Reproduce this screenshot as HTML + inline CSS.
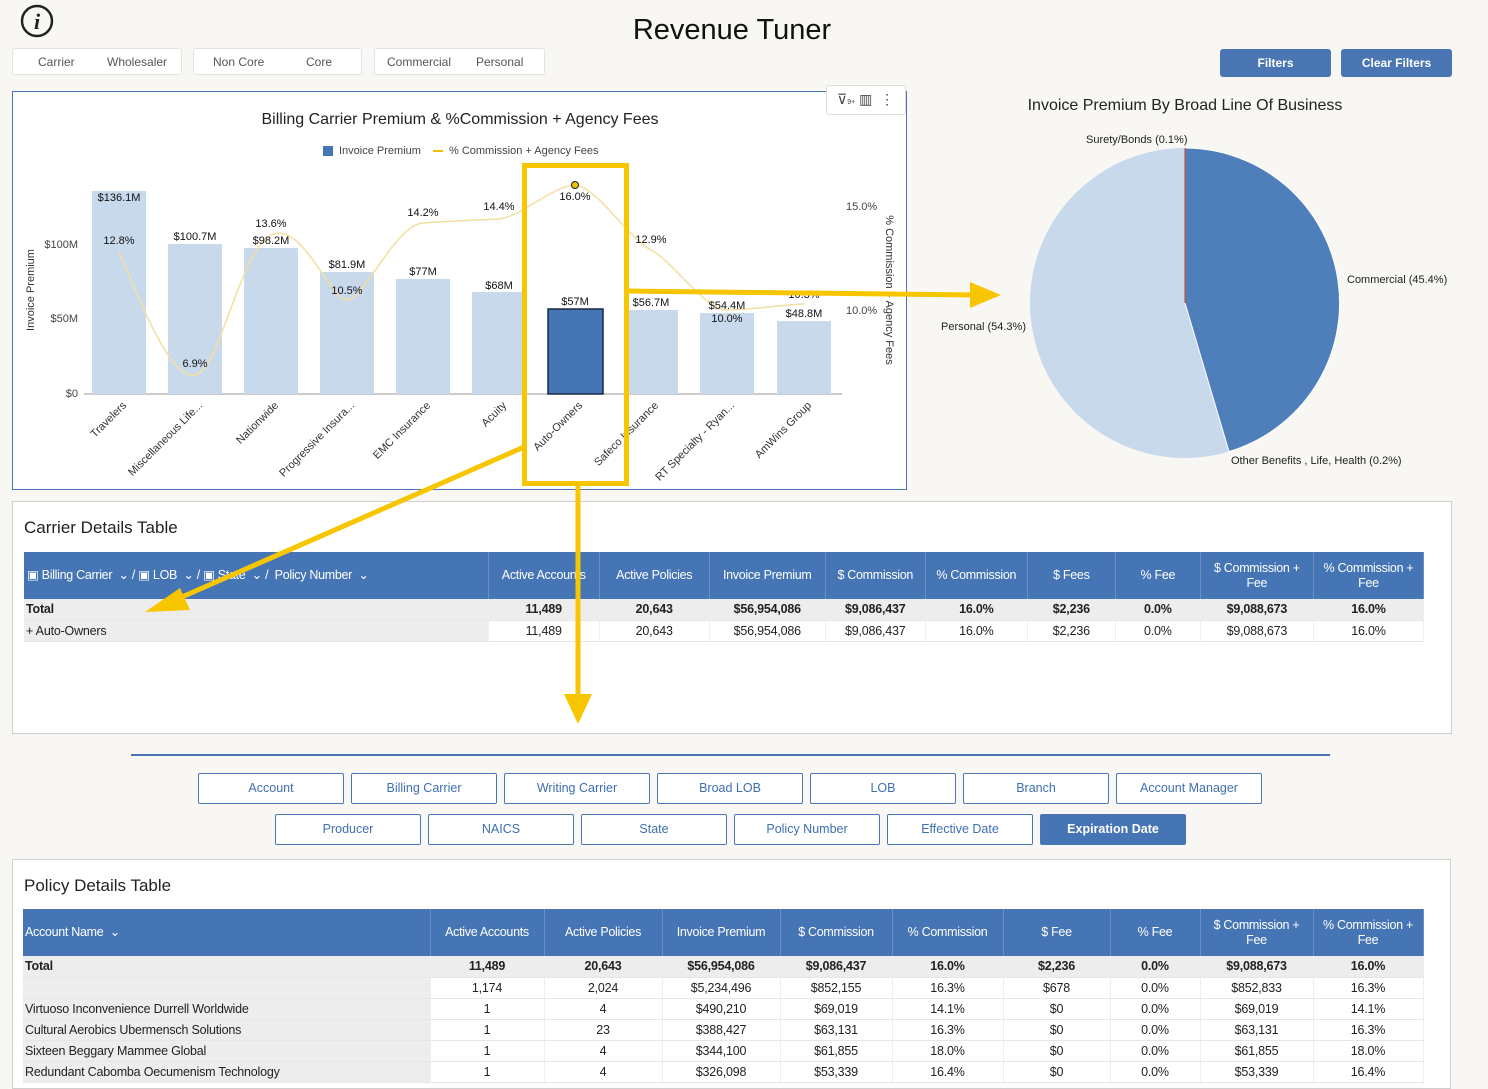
<!DOCTYPE html>
<html><head><meta charset="utf-8"><style>
*{box-sizing:border-box;margin:0;padding:0}
body{width:1488px;height:1077px;background:#f8f7f3;font-family:"Liberation Sans",sans-serif;position:relative;overflow:hidden;color:#222}
.abs{position:absolute}
.seg{position:absolute;top:48px;height:27px;background:#fff;border:1px solid #e3e3e3;border-radius:3px;font-size:12px;color:#555}
.seg span{position:absolute;top:6px}
.btn{position:absolute;background:#4a77b4;color:#fff;font-size:12px;font-weight:bold;text-align:center;border-radius:3px;line-height:28px}
.panel{position:absolute;background:#fff;border:1px solid #cfcfcf}
table{border-collapse:collapse;table-layout:fixed;position:absolute;font-size:12.5px}
th{background:#4575b4;color:#fff;font-weight:normal;border-right:1px solid #6b90c4;text-align:center;font-size:12.5px;line-height:15px;letter-spacing:-0.3px}
td{text-align:center;height:21px;border-bottom:1px solid #e6e6e6;border-right:1px solid #eee;letter-spacing:-0.2px}
td.l{text-align:left;background:#ededed;padding-left:2px}
tr.t td{background:#ededed;font-weight:bold}
.nb{position:absolute;height:31px;border:1px solid #4a77b4;border-radius:2px;color:#3f6fb0;font-size:12.5px;text-align:center;line-height:29px;background:#fff;width:146px}
</style></head><body>
<svg class="abs" style="left:19px;top:3px" width="36" height="36" viewBox="0 0 36 36"><circle cx="18" cy="18" r="15" fill="none" stroke="#222" stroke-width="2.5"/><text x="18" y="26" font-family="Liberation Serif" font-style="italic" font-weight="bold" font-size="22" text-anchor="middle" fill="#222">i</text></svg>
<div class="abs" style="left:0;width:1464px;top:14px;text-align:center;font-size:29px;color:#111">Revenue Tuner</div>
<div class="seg" style="left:12px;width:170px"><span style="left:25px">Carrier</span><span style="left:94px">Wholesaler</span></div>
<div class="seg" style="left:193px;width:169px"><span style="left:19px">Non Core</span><span style="left:112px">Core</span></div>
<div class="seg" style="left:374px;width:171px"><span style="left:12px">Commercial</span><span style="left:101px">Personal</span></div>
<div class="btn" style="left:1220px;top:49px;width:111px">Filters</div>
<div class="btn" style="left:1341px;top:49px;width:111px">Clear Filters</div>

<div class="panel" style="left:12px;top:91px;width:895px;height:399px;border-color:#4a77b4"></div>
<div class="abs" style="left:826px;top:85px;width:80px;height:30px;background:#fff;border:1px solid #ddd;border-radius:3px;font-size:14px;color:#444;padding:5px 0 0 10px">⊽<span style="font-size:7px">9+</span> ▥ &nbsp;⋮</div>

<svg class="abs" style="left:0;top:0" width="1488" height="1077" font-family="Liberation Sans">
<text x="460" y="124" font-size="16" text-anchor="middle" fill="#222">Billing Carrier Premium &amp; %Commission + Agency Fees</text>
<rect x="323" y="146" width="10" height="10" fill="#4575b4"/><text x="339" y="154" font-size="11" fill="#444">Invoice Premium</text>
<line x1="433" y1="151" x2="443" y2="151" stroke="#f0c000" stroke-width="2"/><text x="449" y="154" font-size="11" fill="#444">% Commission + Agency Fees</text>
<text x="78" y="248" font-size="11" text-anchor="end" fill="#444">$100M</text>
<text x="78" y="322" font-size="11" text-anchor="end" fill="#444">$50M</text>
<text x="78" y="397" font-size="11" text-anchor="end" fill="#444">$0</text>
<text x="34" y="290" font-size="11" text-anchor="middle" fill="#333" transform="rotate(-90 34 290)">Invoice Premium</text>
<text x="846" y="210" font-size="11" fill="#444">15.0%</text>
<text x="846" y="314" font-size="11" fill="#444">10.0%</text>
<text x="886" y="290" font-size="11" text-anchor="middle" fill="#333" transform="rotate(90 886 290)">% Commission + Agency Fees</text>
<line x1="84" y1="394" x2="842" y2="394" stroke="#999"/>
<g fill="#c9d9ec">
<rect x="92" y="191" width="54" height="203"/><rect x="168" y="244" width="54" height="150"/><rect x="244" y="248" width="54" height="146"/><rect x="320" y="272" width="54" height="122"/><rect x="396" y="279" width="54" height="115"/><rect x="472" y="292" width="54" height="102"/><rect x="624" y="310" width="54" height="84"/><rect x="700" y="313" width="54" height="81"/><rect x="777" y="321" width="54" height="73"/>
</g>
<rect x="548" y="309" width="55" height="85" fill="#4575b4" stroke="#1a2a44" stroke-width="1.5"/>
<path d="M119 252 C140 300,170 380,195 375 S240 250,271 235 S330 300,347 300 S395 225,423 223 S480 220,499 219 S555 185,575 185 S630 240,651 250 S705 310,727 310 S790 304,804 304" fill="none" stroke="#f3dfa0" stroke-width="1.5"/>
<circle cx="575" cy="185" r="3.5" fill="#f0c000" stroke="#222"/>
<g font-size="11" fill="#111" text-anchor="middle">
<text x="119" y="201">$136.1M</text><text x="195" y="240">$100.7M</text><text x="271" y="244">$98.2M</text><text x="347" y="268">$81.9M</text><text x="423" y="275">$77M</text><text x="499" y="289">$68M</text><text x="575" y="305">$57M</text><text x="651" y="306">$56.7M</text><text x="727" y="309">$54.4M</text><text x="804" y="317">$48.8M</text>
<text x="119" y="244">12.8%</text><text x="195" y="367">6.9%</text><text x="271" y="227">13.6%</text><text x="347" y="294">10.5%</text><text x="423" y="216">14.2%</text><text x="499" y="210">14.4%</text><text x="575" y="200">16.0%</text><text x="651" y="243">12.9%</text><text x="727" y="322">10.0%</text><text x="804" y="298">10.3%</text>
</g>
<g font-size="11" fill="#333" text-anchor="end">
<text transform="translate(127,406) rotate(-45)">Travelers</text>
<text transform="translate(203,406) rotate(-45)">Miscellaneous Life...</text>
<text transform="translate(279,406) rotate(-45)">Nationwide</text>
<text transform="translate(355,406) rotate(-45)">Progressive Insura...</text>
<text transform="translate(431,406) rotate(-45)">EMC Insurance</text>
<text transform="translate(507,406) rotate(-45)">Acuity</text>
<text transform="translate(583,406) rotate(-45)">Auto-Owners</text>
<text transform="translate(659,406) rotate(-45)">Safeco Insurance</text>
<text transform="translate(735,406) rotate(-45)">RT Specialty - Ryan...</text>
<text transform="translate(812,406) rotate(-45)">AmWins Group</text>
</g>
<text x="1185" y="110" font-size="16" text-anchor="middle" fill="#222">Invoice Premium By Broad Line Of Business</text>
<circle cx="1185" cy="303" r="155" fill="#c9d9ec"/>
<path d="M1185 303 L1185 148 A155 155 0 0 1 1229 451.5 Z" fill="#4f7fba" stroke="#fff" stroke-width="1"/>
<line x1="1185" y1="148" x2="1185" y2="303" stroke="#d04020" stroke-width="1"/>
<g font-size="11" fill="#222">
<text x="1086" y="143">Surety/Bonds (0.1%)</text>
<text x="1347" y="283">Commercial (45.4%)</text>
<text x="941" y="330">Personal (54.3%)</text>
<text x="1231" y="464">Other Benefits , Life, Health (0.2%)</text>
</g>
</svg>

<div class="panel" style="left:12px;top:501px;width:1440px;height:233px"></div>
<div class="abs" style="left:24px;top:518px;font-size:17px;color:#222">Carrier Details Table</div>
<table style="left:24px;top:552px;width:1400px">
<colgroup><col style="width:464px"><col style="width:111px"><col style="width:110px"><col style="width:116px"><col style="width:100px"><col style="width:102px"><col style="width:88px"><col style="width:85px"><col style="width:113px"><col style="width:110px"></colgroup>
<tr style="height:47px"><th style="text-align:left;padding-left:3px">▣ Billing Carrier &nbsp;⌄ / ▣ LOB &nbsp;⌄ / ▣ State &nbsp;⌄ / &nbsp;Policy Number &nbsp;⌄</th><th>Active Accounts</th><th>Active Policies</th><th>Invoice Premium</th><th>$ Commission</th><th>% Commission</th><th>$ Fees</th><th>% Fee</th><th>$ Commission +<br>Fee</th><th>% Commission +<br>Fee</th></tr>
<tr class="t"><td class="l">Total</td><td>11,489</td><td>20,643</td><td>$56,954,086</td><td>$9,086,437</td><td>16.0%</td><td>$2,236</td><td>0.0%</td><td>$9,088,673</td><td>16.0%</td></tr>
<tr><td class="l">+ Auto-Owners</td><td>11,489</td><td>20,643</td><td>$56,954,086</td><td>$9,086,437</td><td>16.0%</td><td>$2,236</td><td>0.0%</td><td>$9,088,673</td><td>16.0%</td></tr>
</table>

<div class="abs" style="left:131px;top:754px;width:1199px;height:2px;background:#4a77b4"></div>
<div class="nb" style="left:198px;top:773px">Account</div>
<div class="nb" style="left:351px;top:773px">Billing Carrier</div>
<div class="nb" style="left:504px;top:773px">Writing Carrier</div>
<div class="nb" style="left:657px;top:773px">Broad LOB</div>
<div class="nb" style="left:810px;top:773px">LOB</div>
<div class="nb" style="left:963px;top:773px">Branch</div>
<div class="nb" style="left:1116px;top:773px">Account Manager</div>
<div class="nb" style="left:275px;top:814px">Producer</div>
<div class="nb" style="left:428px;top:814px">NAICS</div>
<div class="nb" style="left:581px;top:814px">State</div>
<div class="nb" style="left:734px;top:814px">Policy Number</div>
<div class="nb" style="left:887px;top:814px">Effective Date</div>
<div class="nb" style="left:1040px;top:814px;background:#4575b4;color:#fff;font-weight:bold">Expiration Date</div>

<div class="panel" style="left:12px;top:859px;width:1439px;height:230px"></div>
<div class="abs" style="left:24px;top:876px;font-size:17px;color:#222">Policy Details Table</div>
<table style="left:23px;top:909px;width:1400px">
<colgroup><col style="width:407px"><col style="width:114px"><col style="width:118px"><col style="width:118px"><col style="width:112px"><col style="width:111px"><col style="width:107px"><col style="width:90px"><col style="width:113px"><col style="width:110px"></colgroup>
<tr style="height:47px"><th style="text-align:left;padding-left:2px">Account Name &nbsp;⌄</th><th>Active Accounts</th><th>Active Policies</th><th>Invoice Premium</th><th>$ Commission</th><th>% Commission</th><th>$ Fee</th><th>% Fee</th><th>$ Commission +<br>Fee</th><th>% Commission +<br>Fee</th></tr>
<tr class="t"><td class="l">Total</td><td>11,489</td><td>20,643</td><td>$56,954,086</td><td>$9,086,437</td><td>16.0%</td><td>$2,236</td><td>0.0%</td><td>$9,088,673</td><td>16.0%</td></tr>
<tr><td class="l"></td><td>1,174</td><td>2,024</td><td>$5,234,496</td><td>$852,155</td><td>16.3%</td><td>$678</td><td>0.0%</td><td>$852,833</td><td>16.3%</td></tr>
<tr><td class="l">Virtuoso Inconvenience Durrell Worldwide</td><td>1</td><td>4</td><td>$490,210</td><td>$69,019</td><td>14.1%</td><td>$0</td><td>0.0%</td><td>$69,019</td><td>14.1%</td></tr>
<tr><td class="l">Cultural Aerobics Ubermensch Solutions</td><td>1</td><td>23</td><td>$388,427</td><td>$63,131</td><td>16.3%</td><td>$0</td><td>0.0%</td><td>$63,131</td><td>16.3%</td></tr>
<tr><td class="l">Sixteen Beggary Mammee Global</td><td>1</td><td>4</td><td>$344,100</td><td>$61,855</td><td>18.0%</td><td>$0</td><td>0.0%</td><td>$61,855</td><td>18.0%</td></tr>
<tr><td class="l">Redundant Cabomba Oecumenism Technology</td><td>1</td><td>4</td><td>$326,098</td><td>$53,339</td><td>16.4%</td><td>$0</td><td>0.0%</td><td>$53,339</td><td>16.4%</td></tr>
</table>

<svg class="abs" style="left:0;top:0" width="1488" height="1077">
<g stroke="#f7c600" stroke-width="5" fill="none">
<rect x="524.5" y="165.5" width="102" height="318"/>
<line x1="627" y1="291" x2="975" y2="295"/>
<line x1="578" y1="484" x2="578" y2="698"/>
<line x1="524" y1="447" x2="175" y2="600"/>
</g>
<g fill="#f7c600">
<polygon points="1001,295 970,282 970,308"/>
<polygon points="578,724 564,694 592,694"/>
<polygon points="145,612 180,588 190,610"/>
</g>
</svg>
</body></html>
